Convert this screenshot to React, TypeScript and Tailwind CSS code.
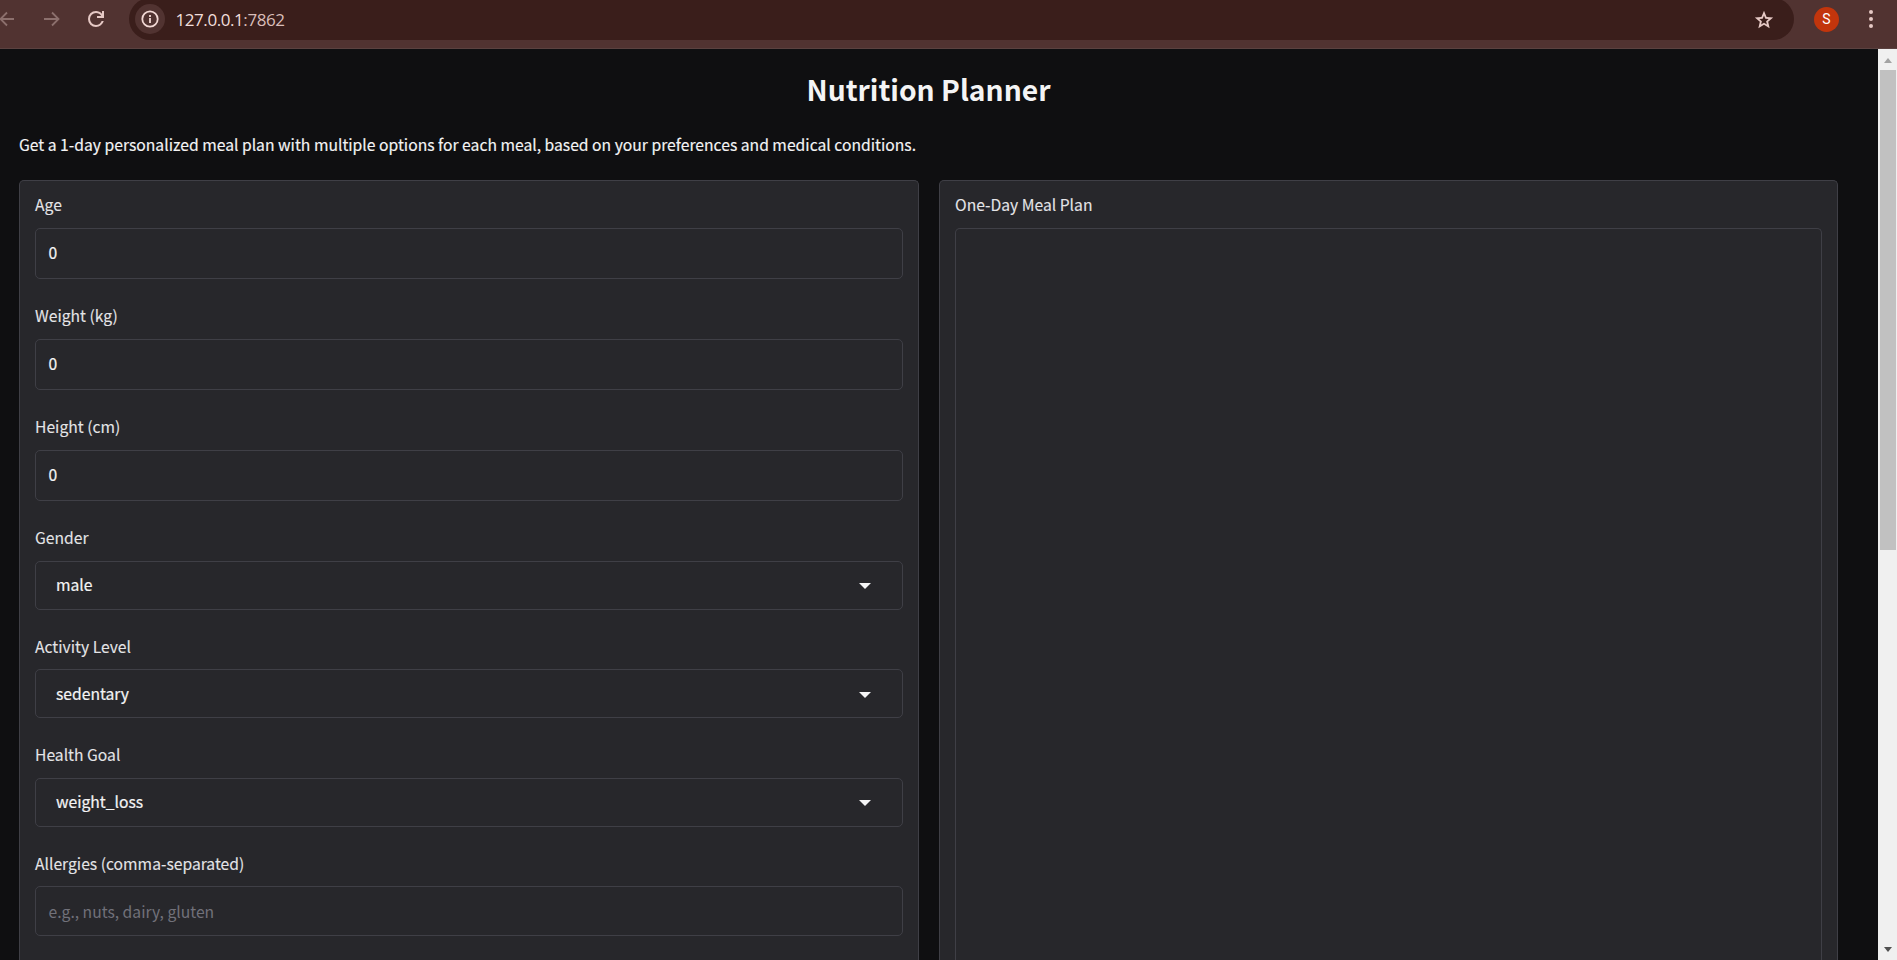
import React from "react";

type FieldProps = {
  label: string;
  value?: string;
  placeholder?: string;
  kind: "number" | "select" | "text";
  className?: string;
  labelClassName?: string;
  valueClassName?: string;
  arrowClassName?: string;
};

const labelClass =
  "block text-[15.68px] leading-[20px] whitespace-nowrap text-[#e4e4e7] [-webkit-text-stroke:0.1px]";

function Field({
  label,
  value,
  placeholder,
  kind,
  className = "",
  labelClassName = "h-[33px]",
  valueClassName = "pb-0.5",
  arrowClassName = "mt-px",
}: FieldProps) {
  const box = "w-full rounded-[5px] border border-[#3f3f46] text-[15.68px] leading-[20px]";
  return (
    <div className={className}>
      <span className={`${labelClass} ${labelClassName}`}>{label}</span>
      {kind === "select" && (
        <div className={`${box} flex h-[49px] items-center justify-between pr-[31px] pl-5 text-[#f4f4f5]`}>
          <span className={`${valueClassName} [-webkit-text-stroke:0.2px]`}>{value}</span>
          <svg width="12" height="6" viewBox="0 0 12 6" fill="#f4f4f5" className={arrowClassName}>
            <path d="M0 0h12L6 6z" />
          </svg>
        </div>
      )}
      {kind === "number" && (
        <div className={`${box} flex h-[51px] items-center px-[12.500px] pb-px text-[#f4f4f5] [-webkit-text-stroke:0.2px]`}>
          {value}
        </div>
      )}
      {kind === "text" && (
        <div className={`${box} flex h-[50px] items-center px-[12.500px] pt-0.5 text-[#71717a]`}>{placeholder}</div>
      )}
    </div>
  );
}

function BrowserBar() {
  return (
    <header className="flex h-[49px] shrink-0 items-start overflow-hidden border-b border-[#5b4240] bg-[#513331] text-[#e6c9c5]">
      <div className="flex h-[38px] w-[129px] shrink-0 items-center">
        <svg width="14" height="16" viewBox="0 0 14 16" fill="none" stroke="#8c706d" strokeWidth="1.8">
          <path d="M14 8H1M7 1.5L.5 8 7 14.5" />
        </svg>
        <svg width="16" height="16" viewBox="0 0 16 16" fill="none" stroke="#8c706d" strokeWidth="1.8" className="ml-[30px]">
          <path d="M0 8h14M8 1.500L14.500 8 8 14.500" />
        </svg>
        <svg width="24" height="24" viewBox="0 0 24 24" fill="#e6c9c5" className="ml-6">
          <path d="M12 20q-3.350 0-5.675-2.325T4 12t2.325-5.675T12 4q1.725 0 3.300.7125T18 6.750V4h2v7h-7V9h4.200q-.8-1.400-2.1875-2.200T12 6Q9.500 6 7.750 7.750T6 12t1.750 4.250T12 18q1.925 0 3.475-1.100T17.650 14h2.100q-.7 2.650-2.850 4.325T12 20" />
        </svg>
      </div>
      <div className="-mt-0.5 flex h-[42px] w-[1665px] shrink-0 items-center rounded-full bg-[#3a1e1b] pr-[19px] pl-1.5">
        <span className="flex size-[30px] items-center justify-center rounded-full bg-[#513331]">
          <svg width="18" height="18" viewBox="0 0 18 18" fill="none" stroke="#f3d9d5" strokeWidth="1.800">
            <circle cx="9" cy="9" r="7.700" />
            <path d="M9 8v5M9 5v1.900" />
          </svg>
        </span>
        <span className="ml-[10.5px] pt-px font-['Open_Sans','Noto_Sans',sans-serif] text-[17px] leading-5 tracking-[-0.43px] text-[#f1dedc]">
          127.0.0.1<span className="text-[#d9bdb9]">:7862</span>
        </span>
        <svg width="22" height="22" viewBox="0 0 24 24" fill="#e6c9c5" className="mt-px ml-auto">
          <path d="m8.850 16.825 3.150-1.900 3.150 1.925-.825-3.600 2.775-2.400-3.650-.325-1.450-3.400-1.450 3.375-3.650.325 2.775 2.425zM5.825 21l1.625-7.025L2 9.250l7.200-.625L12 2l2.800 6.625 7.200.625-5.450 4.725L18.175 21 12 17.275z" />
        </svg>
      </div>
      <div className="flex h-[38px] items-center">
        <span className="ml-5 flex size-[25px] items-center justify-center rounded-full bg-[#c2350c] font-['Roboto',sans-serif] text-[14px] text-white">
          S
        </span>
        <svg width="4" height="18" viewBox="0 0 4 18" fill="#e6c9c5" className="ml-[30px]">
          <circle cx="2" cy="2" r="2" />
          <circle cx="2" cy="9" r="2" />
          <circle cx="2" cy="16" r="2" />
        </svg>
      </div>
    </header>
  );
}

function Scrollbar() {
  return (
    <div className="flex w-[19px] shrink-0 flex-col items-center bg-[#f0f0f0]">
      <div className="flex h-[21px] shrink-0 items-center justify-center">
        <svg width="8" height="5" viewBox="0 0 8 5" fill="#a3a3a3" className="mt-0.5">
          <path d="M0 5h8L4 0z" />
        </svg>
      </div>
      <div className="h-[480px] w-4 shrink-0 bg-[#c1c1c1]" />
      <svg width="8" height="5" viewBox="0 0 8 5" fill="#505050" className="mt-auto mb-2">
        <path d="M0 0h8L4 5z" />
      </svg>
    </div>
  );
}

const panelClass =
  "flex flex-col rounded-t-[5px] border border-b-0 border-[#3f3f46] bg-[#27272b] px-[15px] pt-3.5";

export default function App() {
  return (
    <div className="flex h-[960px] w-full flex-col overflow-hidden bg-[#0f0f11] font-['Noto_Sans_CJK_SC',sans-serif]">
      <BrowserBar />
      <div className="flex min-h-0 flex-1">
        <main className="flex min-w-0 flex-1 flex-col overflow-hidden pr-10 pl-[19px]">
          <h1 className="mt-[19px] h-[42px] text-center text-[28.25px] leading-[42px] font-semibold text-[#f4f4f5]">
            Nutrition Planner
          </h1>
          <p className="mt-[22px] h-[48px] text-[15.69px] leading-[26px] text-[#f4f4f5] [-webkit-text-stroke:0.15px]">
            Get a 1-day personalized meal plan with multiple options for each meal, based on your preferences and
            medical conditions.
          </p>
          <div className="grid min-h-0 flex-1 grid-cols-[900px_899px] gap-5">
            <section className={panelClass}>
              <Field kind="number" label="Age" value="0" />
              <Field kind="number" label="Weight (kg)" value="0" className="mt-[27px]" />
              <Field kind="number" label="Height (cm)" value="0" className="mt-[27px]" />
              <Field kind="select" label="Gender" value="male" className="mt-[27px]" />
              <Field
                kind="select"
                label="Activity Level"
                value="sedentary"
                className="mt-[27px]"
                labelClassName="h-8"
                valueClassName="pb-0"
                arrowClassName="mt-[3px]"
              />
              <Field kind="select" label="Health Goal" value="weight_loss" className="mt-[27px]" />
              <Field
                kind="text"
                label="Allergies (comma-separated)"
                placeholder="e.g., nuts, dairy, gluten"
                className="mt-[27px]"
                labelClassName="h-8"
              />
            </section>
            <section className={panelClass}>
              <span className={`${labelClass} h-[33px]`}>One-Day Meal Plan</span>
              <div className="flex-1 rounded-t-[5px] border border-b-0 border-[#3f3f46]" />
            </section>
          </div>
        </main>
        <Scrollbar />
      </div>
    </div>
  );
}
